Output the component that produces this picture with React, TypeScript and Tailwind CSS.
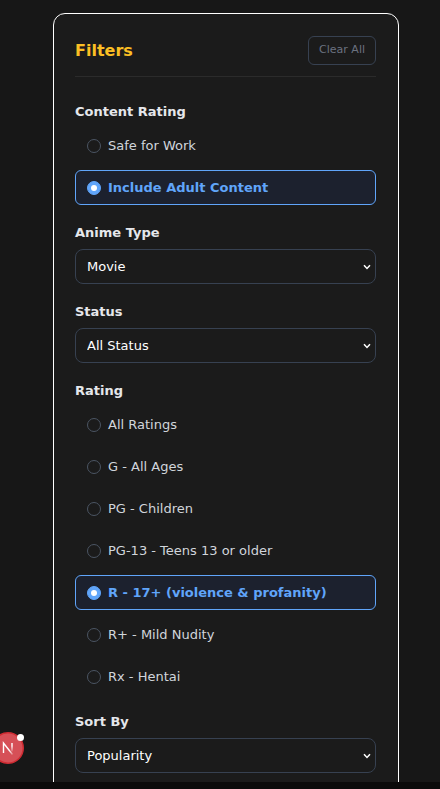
import { useState } from "react";

type Option = { value: string; label: string };

const contentRatings: Option[] = [
  { value: "sfw", label: "Safe for Work" },
  { value: "adult", label: "Include Adult Content" },
];

const ratings: Option[] = [
  { value: "all", label: "All Ratings" },
  { value: "g", label: "G - All Ages" },
  { value: "pg", label: "PG - Children" },
  { value: "pg13", label: "PG-13 - Teens 13 or older" },
  { value: "r17", label: "R - 17+ (violence & profanity)" },
  { value: "r", label: "R+ - Mild Nudity" },
  { value: "rx", label: "Rx - Hentai" },
];

function RadioGroup({ title, name, options, initial }: { title: string; name: string; options: Option[]; initial: string }) {
  const [value, setValue] = useState(initial);
  return (
    <fieldset>
      <legend className="mb-1.5 text-[13px] leading-5 font-semibold text-[#e5e7eb]">{title}</legend>
      <div className="flex flex-col gap-[7px]">
        {options.map((o) => (
          <label
            key={o.value}
            className={
              o.value === value
                ? "flex h-[35px] items-center gap-[7px] rounded-md border border-[#60a5fa] bg-[#1c212e] px-[11px] text-[13px] font-semibold text-[#60a5fa]"
                : "flex h-[35px] items-center gap-[7px] rounded-md border border-transparent px-[11px] text-[13px] text-[#d1d5db]"
            }
          >
            <input
              type="radio"
              name={name}
              value={o.value}
              checked={o.value === value}
              onChange={() => setValue(o.value)}
              className="grid size-[14px] shrink-0 appearance-none place-items-center rounded-full border border-[#4b5563] checked:border-[#60a5fa] checked:bg-[#60a5fa] checked:before:size-[6px] checked:before:rounded-full checked:before:bg-white checked:before:content-['']"
            />
            {o.label}
          </label>
        ))}
      </div>
    </fieldset>
  );
}

function SelectField({ id, title, options }: { id: string; title: string; options: string[] }) {
  return (
    <div className="flex flex-col gap-1.5">
      <label htmlFor={id} className="text-[13px] leading-5 font-semibold text-[#e5e7eb]">
        {title}
      </label>
      <div className="grid items-center">
        <select
          id={id}
          className="col-start-1 row-start-1 h-[35px] w-full appearance-none rounded-lg border border-[#374151] bg-[#1b1b1b] px-[11px] text-[13px] text-white"
        >
          {options.map((o) => (
            <option key={o}>{o}</option>
          ))}
        </select>
        <svg
          viewBox="0 0 8 6"
          className="pointer-events-none col-start-1 row-start-1 mr-[5px] h-[6px] w-[8px] justify-self-end"
          fill="none"
          stroke="white"
          strokeWidth="1.5"
        >
          <path d="M1 1.2L4 4.4L7 1.2" />
        </svg>
      </div>
    </div>
  );
}

function DevBadge() {
  return (
    <button type="button" aria-label="Open developer tools" className="absolute bottom-[25px] left-[-8px] size-8 rounded-full">
      <svg viewBox="0 0 32 32" className="size-8" fill="none">
        <defs>
          <linearGradient id="leg" x1="13" y1="14" x2="21" y2="23" gradientUnits="userSpaceOnUse">
            <stop offset="0.5" stopColor="white" />
            <stop offset="1" stopColor="white" stopOpacity="0.2" />
          </linearGradient>
          <linearGradient id="stem" x1="20" y1="10" x2="20" y2="20" gradientUnits="userSpaceOnUse">
            <stop offset="0.4" stopColor="white" />
            <stop offset="1" stopColor="white" stopOpacity="0.1" />
          </linearGradient>
        </defs>
        <circle cx="16" cy="16" r="15.25" fill="#d65057" stroke="#cf2c33" strokeWidth="1.5" />
        <path d="M11.5 21V11L20.5 22.5" stroke="url(#leg)" strokeWidth="1.4" />
        <path d="M20 11V19.5" stroke="url(#stem)" strokeWidth="1.4" />
      </svg>
      <span className="absolute top-[2px] right-0 size-[7px] rounded-full bg-white" />
    </button>
  );
}

export default function App() {
  return (
    <div className="relative flex h-screen flex-col overflow-hidden bg-[#171717] font-['DejaVu_Sans',sans-serif]">
      <main className="min-h-0 flex-1 overflow-hidden pt-[13px] pr-[41px] pl-[53px]">
        <aside className="rounded-xl border border-white bg-[#1b1b1b] pt-[22px] pr-[22px] pb-6 pl-[21px]">
          <header className="flex items-center justify-between border-b border-[#2b2b2b] pb-[11px]">
            <h2 className="text-base font-bold text-[#fbbf24]">Filters</h2>
            <button type="button" className="h-[29px] rounded-md border border-[#374151] px-2.5 text-[11px] text-[#6b7280]">
              Clear All
            </button>
          </header>
          <form className="mt-[25px] flex flex-col gap-[18px]">
            <RadioGroup title="Content Rating" name="content" options={contentRatings} initial="adult" />
            <SelectField id="type" title="Anime Type" options={["Movie"]} />
            <SelectField id="status" title="Status" options={["All Status"]} />
            <RadioGroup title="Rating" name="rating" options={ratings} initial="r17" />
            <SelectField id="sort" title="Sort By" options={["Popularity"]} />
          </form>
        </aside>
      </main>
      <footer className="h-[7px] shrink-0 bg-[#0b0b0b]" />
      <DevBadge />
    </div>
  );
}
